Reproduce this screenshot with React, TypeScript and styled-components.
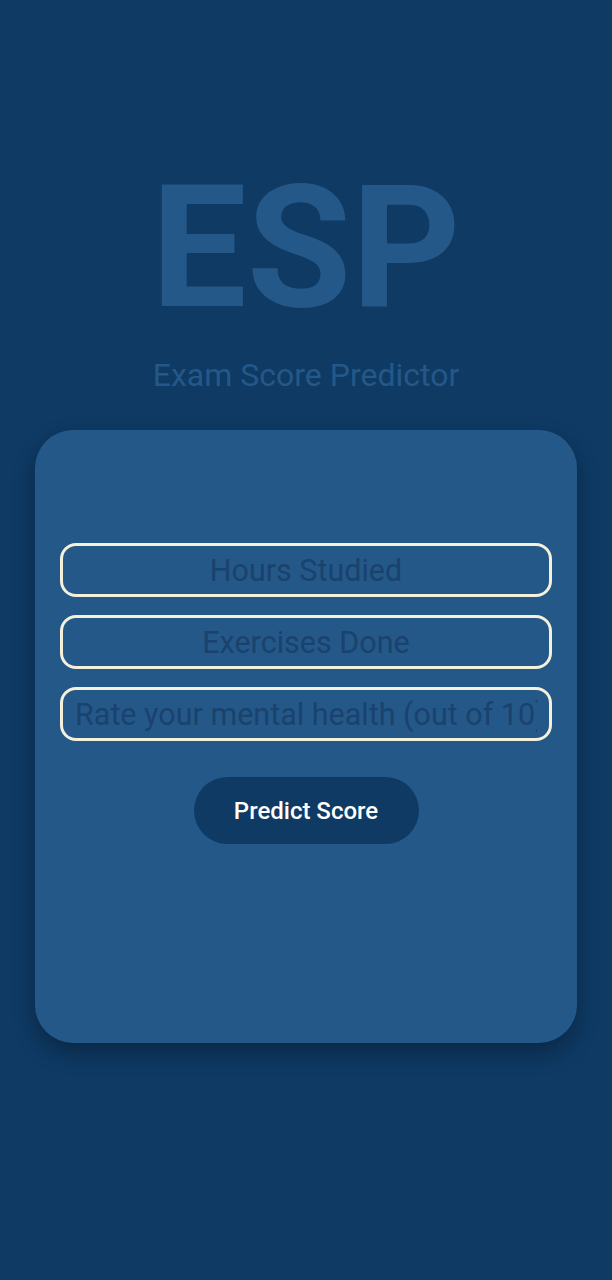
import React from "react";
import styled, { createGlobalStyle } from "styled-components";

const GlobalStyle = createGlobalStyle`
  html, body {
    margin: 0;
    padding: 0;
    background: #0e3a64;
  }
  * { box-sizing: border-box; }
`;

const Page = styled.main`
  min-height: 1280px;
  background: #0e3a64;
  font-family: Roboto, "Liberation Sans", sans-serif;
  display: flex;
  flex-direction: column;
  align-items: center;
  padding-top: 163px;
`;

const Logo = styled.h1`
  margin: 0;
  font-size: 170px;
  line-height: 170px;
  font-weight: 700;
  color: #245889;
  letter-spacing: 0;
`;

const Subtitle = styled.p`
  margin: 23px 0 0;
  font-size: 32px;
  line-height: 38px;
  font-weight: 400;
  color: #245889;
`;

const Card = styled.section`
  margin-top: 36px;
  width: 542px;
  height: 613px;
  background: #245889;
  border-radius: 38px;
  box-shadow: 0 10px 22px rgba(0, 0, 0, 0.3);
  padding: 113px 25px 0;
  display: flex;
  flex-direction: column;
  align-items: center;
  gap: 18px;
`;

const Field = styled.input`
  width: 100%;
  height: 54px;
  border: 3px solid #f4f0d9;
  border-radius: 16px;
  background: transparent;
  padding: 0 12px;
  font-family: Roboto, "Liberation Sans", sans-serif;
  font-size: 30.5px;
  text-align: center;
  color: #f4f0d9;
  outline: none;
  &::placeholder {
    color: #1a426d;
    opacity: 1;
  }
`;

const PredictButton = styled.button`
  margin-top: 18px;
  width: 225px;
  height: 67px;
  border: none;
  border-radius: 34px;
  background: #0e3a64;
  color: #ffffff;
  font-family: Roboto, "Liberation Sans", sans-serif;
  font-size: 24px;
  font-weight: 500;
  cursor: pointer;
`;

export default function App() {
  return (
    <>
      <GlobalStyle />
      <Page>
        <Logo>ESP</Logo>
        <Subtitle>Exam Score Predictor</Subtitle>
        <Card>
          <Field placeholder="Hours Studied" />
          <Field placeholder="Exercises Done" />
          <Field placeholder="Rate your mental health (out of 10)" />
          <PredictButton>Predict Score</PredictButton>
        </Card>
      </Page>
    </>
  );
}
